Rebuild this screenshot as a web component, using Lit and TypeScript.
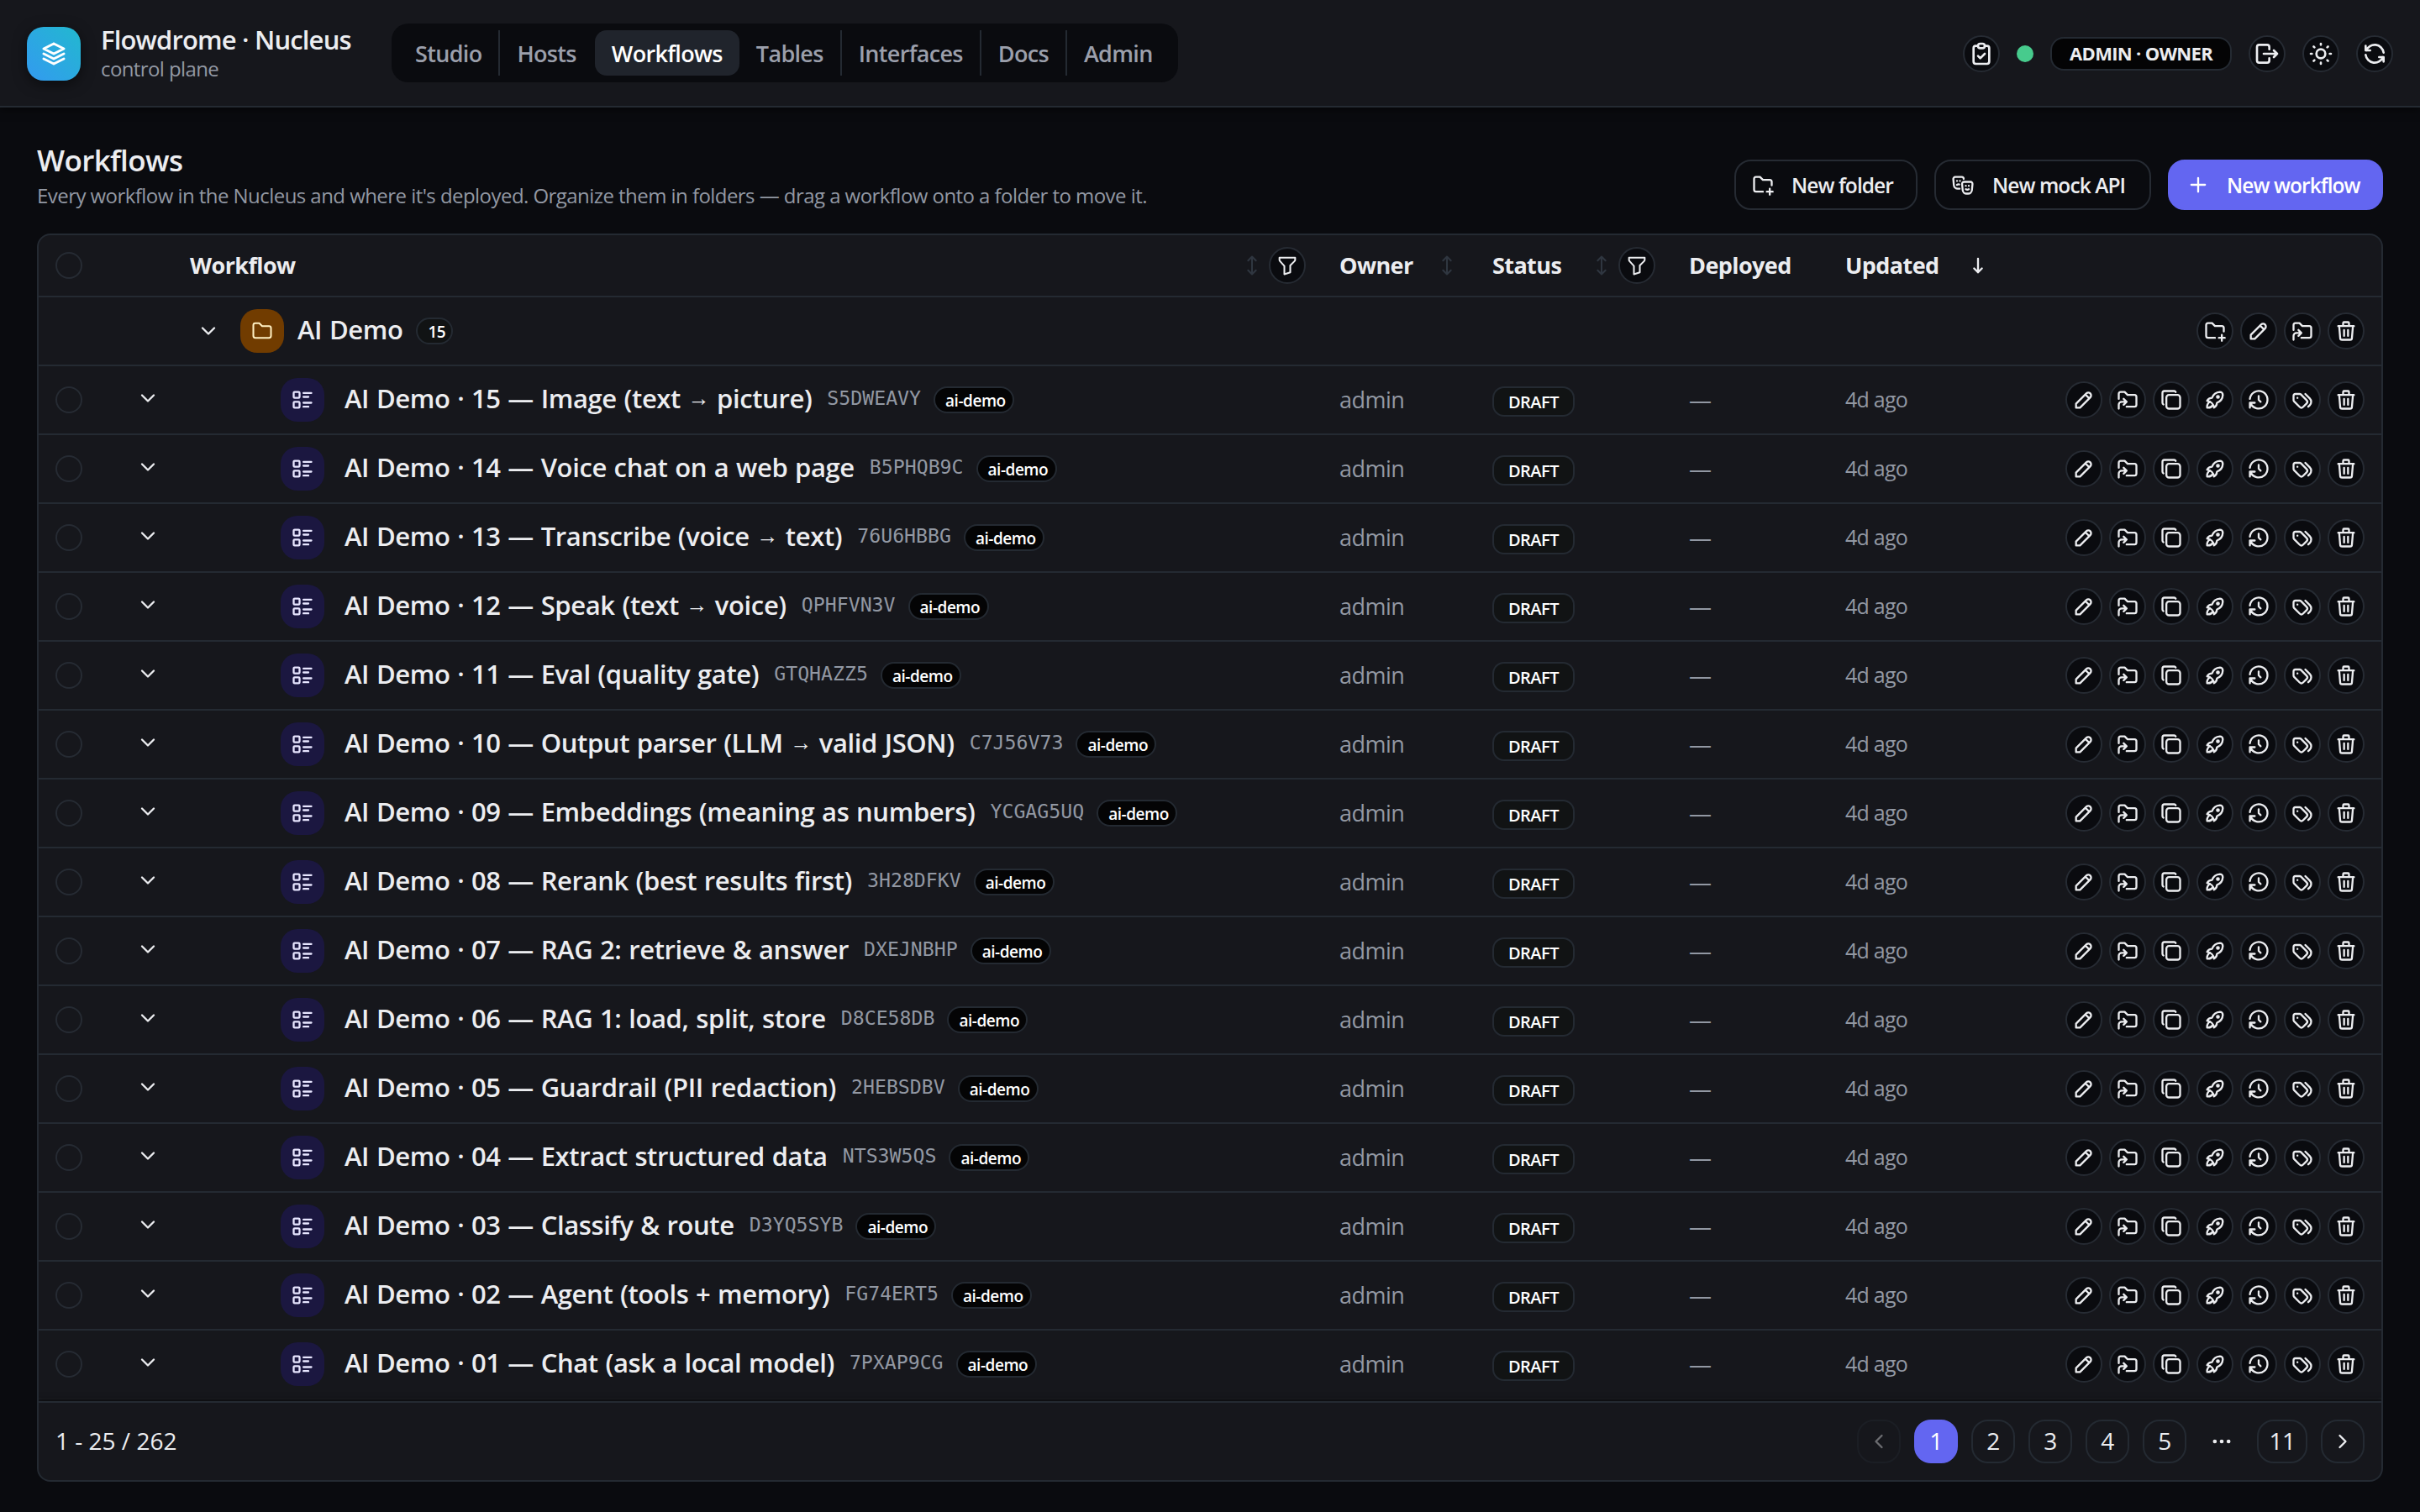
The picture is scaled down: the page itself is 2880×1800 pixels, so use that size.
import { LitElement, html, css, svg } from 'lit';
import { customElement, property } from 'lit/decorators.js';
import { classMap } from 'lit/directives/class-map.js';

const ICONS: Record<string, string> = {
  stack: 'M12 4L4 8l8 4l8-4l-8-4M4 12l8 4l8-4M4 16l8 4l8-4',
  clipboard: 'M9 5H7a2 2 0 0 0-2 2v12a2 2 0 0 0 2 2h10a2 2 0 0 0 2-2V7a2 2 0 0 0-2-2h-2M9 5a2 2 0 0 1 2-2h2a2 2 0 0 1 2 2a2 2 0 0 1-2 2h-2a2 2 0 0 1-2-2M9 14l2 2l4-4',
  logout: 'M14 8V6a2 2 0 0 0-2-2H5a2 2 0 0 0-2 2v12a2 2 0 0 0 2 2h7a2 2 0 0 0 2-2v-2M9 12h12l-3-3M18 15l3-3',
  sun: 'M8 12a4 4 0 1 0 8 0a4 4 0 1 0-8 0M3 12h1M12 3v1M20 12h1M12 20v1M5.6 5.6l.7.7M18.4 5.6l-.7.7M17.7 17.7l.7.7M6.3 17.7l-.7.7',
  refresh: 'M20 11A8.1 8.1 0 0 0 4.5 9M4 5v4h4M4 13a8.1 8.1 0 0 0 15.5 2M20 19v-4h-4',
  folder: 'M5 4h4l3 3h7a2 2 0 0 1 2 2v8a2 2 0 0 1-2 2H5a2 2 0 0 1-2-2V6a2 2 0 0 1 2-2',
  folderPlus: 'M12 19H5a2 2 0 0 1-2-2V6a2 2 0 0 1 2-2h4l3 3h7a2 2 0 0 1 2 2v3.5M16 19h6M19 16v6',
  masks: 'M13.192 9h6.616a2 2 0 0 1 1.992 2.183l-.567 6.182A4 4 0 0 1 17.25 21h-1.5a4 4 0 0 1-3.983-3.635l-.567-6.182A2 2 0 0 1 13.192 9M15 13h.01M18 13h.01M15 16.5c1 .667 2 .667 3 0M8.632 15.982A4.037 4.037 0 0 1 8.25 16h-1.5a4 4 0 0 1-3.983-3.635L2.2 6.183A2 2 0 0 1 4.192 4h6.616a2 2 0 0 1 2 2M6 8h.01M9 8h.01M6 12c.764-.51 1.528-.63 2.291-.36',
  plus: 'M12 5v14M5 12h14',
  sort: 'M8 7l4-4l4 4M8 17l4 4l4-4M12 3v18',
  arrowDown: 'M12 5v14M16 15l-4 4M8 15l4 4',
  filter: 'M4 4h16v2.172a2 2 0 0 1-.586 1.414L15 12v7l-6 2v-8.5L4.52 7.572A2 2 0 0 1 4 6.227z',
  chevronDown: 'M6 9l6 6l6-6',
  chevronLeft: 'M15 6l-6 6l6 6',
  chevronRight: 'M9 6l6 6l-6 6',
  list: 'M13 5h8M13 9h5M13 15h8M13 19h5M3 5a1 1 0 0 1 1-1h4a1 1 0 0 1 1 1v4a1 1 0 0 1-1 1H4a1 1 0 0 1-1-1zM3 15a1 1 0 0 1 1-1h4a1 1 0 0 1 1 1v4a1 1 0 0 1-1 1H4a1 1 0 0 1-1-1z',
  pencil: 'M4 20h4L18.5 9.5a2.828 2.828 0 1 0-4-4L4 16v4M13.5 6.5l4 4',
  move: 'M3 21v-4a3 3 0 0 1 3-3h5M8 17l3-3l-3-3M3 11V6a2 2 0 0 1 2-2h4l3 3h7a2 2 0 0 1 2 2v8a2 2 0 0 1-2 2h-8',
  copy: 'M7 9.667A2.667 2.667 0 0 1 9.667 7h8.666A2.667 2.667 0 0 1 21 9.667v8.666A2.667 2.667 0 0 1 18.333 21H9.667A2.667 2.667 0 0 1 7 18.333zM4.012 16.737A2 2 0 0 1 3 15V5c0-1.1.9-2 2-2h10c.75 0 1.158.385 1.5 1',
  rocket: 'M4 13a8 8 0 0 1 7 7a6 6 0 0 0 3-5a9 9 0 0 0 6-8a3 3 0 0 0-3-3a9 9 0 0 0-8 6a6 6 0 0 0-5 3M7 14a6 6 0 0 0-3 6a6 6 0 0 0 6-3M14 9a1 1 0 1 0 2 0a1 1 0 1 0-2 0',
  history: 'M12 8v4l2 2M3.05 11a9 9 0 1 1 .5 4M3.05 20v-5h5',
  tags: 'M3 8v4.172a2 2 0 0 0 .586 1.414l5.71 5.71a2.41 2.41 0 0 0 3.408 0l3.592-3.592a2.41 2.41 0 0 0 0-3.408l-5.71-5.71A2 2 0 0 0 9.172 6H5a2 2 0 0 0-2 2M18 19l1.592-1.592a4.82 4.82 0 0 0 0-6.816L15 6M7 10h-.01',
  trash: 'M4 7h16M10 11v6M14 11v6M5 7l1 12a2 2 0 0 0 2 2h8a2 2 0 0 0 2-2l1-12M9 7V4a1 1 0 0 1 1-1h4a1 1 0 0 1 1 1v3',
  dots: 'M4 12a1 1 0 1 0 2 0a1 1 0 1 0-2 0M11 12a1 1 0 1 0 2 0a1 1 0 1 0-2 0M18 12a1 1 0 1 0 2 0a1 1 0 1 0-2 0',
};

interface Workflow {
  name: string;
  code: string;
}

const WORKFLOWS: Workflow[] = [
  { name: 'AI Demo · 15 — Image (text → picture)', code: 'S5DWEAVY' },
  { name: 'AI Demo · 14 — Voice chat on a web page', code: 'B5PHQB9C' },
  { name: 'AI Demo · 13 — Transcribe (voice → text)', code: '76U6HBBG' },
  { name: 'AI Demo · 12 — Speak (text → voice)', code: 'QPHFVN3V' },
  { name: 'AI Demo · 11 — Eval (quality gate)', code: 'GTQHAZZ5' },
  { name: 'AI Demo · 10 — Output parser (LLM → valid JSON)', code: 'C7J56V73' },
  { name: 'AI Demo · 09 — Embeddings (meaning as numbers)', code: 'YCGAG5UQ' },
  { name: 'AI Demo · 08 — Rerank (best results first)', code: '3H28DFKV' },
  { name: 'AI Demo · 07 — RAG 2: retrieve & answer', code: 'DXEJNBHP' },
  { name: 'AI Demo · 06 — RAG 1: load, split, store', code: 'D8CE58DB' },
  { name: 'AI Demo · 05 — Guardrail (PII redaction)', code: '2HEBSDBV' },
  { name: 'AI Demo · 04 — Extract structured data', code: 'NTS3W5QS' },
  { name: 'AI Demo · 03 — Classify & route', code: 'D3YQ5SYB' },
  { name: 'AI Demo · 02 — Agent (tools + memory)', code: 'FG74ERT5' },
  { name: 'AI Demo · 01 — Chat (ask a local model)', code: '7PXAP9CG' },
];

const NAV = ['Studio', 'Hosts', 'Workflows', 'Tables', 'Interfaces', 'Docs', 'Admin'];
const FOLDER_ACTIONS = ['folderPlus', 'pencil', 'move', 'trash'];
const ROW_ACTIONS = ['pencil', 'move', 'copy', 'rocket', 'history', 'tags', 'trash'];

@customElement('ui-icon')
export class UiIcon extends LitElement {
  static styles = css`
    :host {
      display: block;
      flex: none;
      width: 28px;
      height: 28px;
      stroke-width: 2;
    }

    svg {
      display: block;
      width: 100%;
      height: 100%;
      fill: none;
      stroke: currentColor;
      stroke-linecap: round;
      stroke-linejoin: round;
    }
  `;

  @property({ type: String })
  name = '';

  render() {
    return html`<svg viewBox="0 0 24 24">${svg`<path d=${ICONS[this.name]}></path>`}</svg>`;
  }
}

@customElement('app-root')
export class AppRoot extends LitElement {
  static styles = css`
    :host {
      display: flex;
      flex-direction: column;
      box-sizing: border-box;
      width: 2880px;
      height: 1800px;
      overflow: hidden;
      background: #0a0b0f;
      color: #ecedf0;
      font-family: 'Open Sans', 'Noto Sans', sans-serif;
      font-size: 28px;
      line-height: 1.35;
      --line: #242a32;
      --panel: #16171c;
      --muted: #9298a3;
    }

    * {
      box-sizing: border-box;
    }

    .header {
      display: flex;
      align-items: center;
      flex: none;
      height: 128px;
      padding: 0 32px;
      background: var(--panel);
      border-bottom: 2px solid var(--line);
      box-shadow: 0 2px 10px rgba(0, 0, 0, 0.6);
    }

    .logo {
      display: grid;
      place-items: center;
      width: 64px;
      height: 64px;
      border-radius: 20px;
      margin: 2px 24px 0 0;
      background: linear-gradient(45deg, #339af0, #22b8cf);
      color: #fff;
      box-shadow: 0 4px 16px rgba(0, 0, 0, 0.5);
    }

    .logo ui-icon {
      width: 36px;
      height: 36px;
    }

    .brand {
      width: 346px;
      white-space: nowrap;
    }

    .brand-name {
      font-size: 31px;
      font-weight: 600;
      line-height: 38px;
      letter-spacing: -0.027em;
    }

    .brand-sub {
      font-size: 24px;
      line-height: 32px;
      color: var(--muted);
      letter-spacing: -0.025em;
    }

    .nav {
      display: flex;
      height: 70px;
      padding: 8px;
      border-radius: 20px;
      background: #0a0b0f;
    }

    .nav-item {
      display: flex;
      align-items: center;
      padding: 2px 20px 0;
      border-right: 2px solid var(--line);
      font-size: 27px;
      font-weight: 600;
      letter-spacing: -0.025em;
      color: #9b9fab;
    }

    .nav-item.plain {
      border-right-color: transparent;
    }

    .nav-item.active {
      border-right: 0;
      border-radius: 14px;
      background: #20242c;
      color: #fff;
    }

    .tools {
      display: flex;
      align-items: center;
      gap: 20px;
      margin: 2px 0 0 auto;
    }

    .round {
      display: grid;
      place-items: center;
      flex: none;
      width: 44px;
      height: 44px;
      border: 2px solid #262b33;
      border-radius: 50%;
      background: #0a0b0f;
    }

    .tools ui-icon {
      width: 32px;
      height: 32px;
    }

    .online {
      width: 20px;
      height: 20px;
      border-radius: 50%;
      background: #47cb8d;
    }

    .role {
      display: grid;
      place-items: center;
      width: 216px;
      height: 40px;
      border: 2px solid var(--line);
      border-radius: 16px;
      background: #040405;
      font-size: 22px;
      font-weight: 700;
      letter-spacing: -0.03em;
      white-space: nowrap;
    }

    .main {
      flex: 1;
      display: flex;
      flex-direction: column;
      min-height: 0;
      padding: 38px 44px 36px;
    }

    .page-head {
      display: flex;
      justify-content: space-between;
      flex: none;
      height: 112px;
    }

    h1 {
      margin: 0;
      font-size: 35px;
      font-weight: 600;
      line-height: 50px;
      letter-spacing: -0.018em;
    }

    .lead {
      font-size: 24px;
      line-height: 34px;
      color: var(--muted);
      letter-spacing: -0.023em;
    }

    .buttons {
      display: flex;
      gap: 20px;
      padding-top: 24px;
    }

    .button {
      display: flex;
      align-items: center;
      gap: 20px;
      height: 60px;
      padding-left: 18px;
      border: 2px solid #262b33;
      border-radius: 20px;
      font-size: 24.5px;
      font-weight: 600;
      letter-spacing: -0.038em;
      white-space: nowrap;
    }

    .button span {
      padding-top: 2px;
    }

    .new-folder {
      width: 218px;
    }

    .new-mock {
      width: 258px;
      gap: 21px;
    }

    .new-workflow {
      width: 256px;
      padding-left: 20px;
      border-color: #6366f1;
      background: #6366f1;
      color: #fff;
    }

    .table {
      display: flex;
      flex-direction: column;
      height: 1486px;
      border: 2px solid var(--line);
      border-radius: 16px;
      background: var(--panel);
      overflow: hidden;
    }

    .row {
      display: grid;
      grid-template-columns: 72px 88px 1368px 182px 234px 186px 212px 446px;
      align-items: center;
      flex: none;
      height: 82px;
      border-bottom: 2px solid var(--line);
    }

    .row.head {
      height: 74px;
      font-size: 27px;
      font-weight: 700;
      letter-spacing: -0.022em;
    }

    .row:last-of-type {
      border-bottom-color: #1b1d22;
    }

    .cell {
      display: flex;
      align-items: center;
      padding: 0 20px;
      white-space: nowrap;
    }

    .head .cell > ui-icon {
      margin-left: auto;
    }

    .head .round {
      margin-left: 6px;
    }

    .head .sort {
      color: #2f3640;
      stroke-width: 1.75;
    }

    .head .round ui-icon {
      stroke-width: 1.75;
    }

    .check {
      width: 32px;
      height: 32px;
      border: 2px solid #262b33;
      border-radius: 50%;
    }

    .expand {
      padding: 0 0 4px 44px;
    }

    .folder-cell {
      grid-column: 3;
      padding-left: 28px;
    }

    .tile {
      display: grid;
      place-items: center;
      flex: none;
      width: 52px;
      height: 52px;
      border-radius: 20px;
    }

    .tile.orange {
      margin: 0 16px 0 24px;
      background: #713c00;
      color: #fff0c2;
    }

    .tile.orange ui-icon {
      stroke-width: 1.75;
    }

    .tile.indigo {
      margin: 0 24px 0 108px;
      background: #1b1740;
      color: #e8e6ff;
    }

    .name {
      font-size: 31px;
      font-weight: 600;
      line-height: 44px;
      letter-spacing: -0.012em;
      word-spacing: 1px;
      padding-bottom: 4px;
    }

    .arrow {
      font-size: 26px;
      line-height: 1;
      vertical-align: 3px;
    }

    .code {
      margin: 0 15px 0 18px;
      padding-bottom: 5px;
      font-family: 'DejaVu Sans Mono', monospace;
      font-size: 23.2px;
      line-height: 34px;
      color: var(--muted);
    }

    .badge {
      display: grid;
      place-items: center;
      height: 32px;
      padding: 2px 12px 0;
      border: 2px solid var(--line);
      border-radius: 16px;
      font-size: 19px;
      font-weight: 600;
      line-height: 26px;
      letter-spacing: -0.025em;
      color: #fff;
      background: #040405;
    }

    .badge.count {
      width: 44px;
      margin-left: 16px;
      background: #111314;
    }

    .badge.tag {
      width: 96px;
    }

    .badge.status {
      width: 98px;
      height: 36px;
      margin-top: 4px;
      border-radius: 14px;
      font-size: 20px;
      background: #111314;
    }

    .muted {
      font-size: 27px;
      color: var(--muted);
      letter-spacing: -0.02em;
    }

    .time {
      font-size: 25px;
      letter-spacing: -0.03em;
    }

    .actions {
      justify-content: flex-end;
      gap: 8px;
    }

    .folder-actions {
      grid-column: 8;
    }

    .footer {
      display: flex;
      align-items: center;
      justify-content: space-between;
      flex: 1;
      margin-top: 2px;
      padding: 0 20px;
      border-top: 2px solid var(--line);
      box-shadow: 0 -2px 6px rgba(0, 0, 0, 0.5);
    }

    .pages {
      display: flex;
      gap: 16px;
    }

    .page {
      display: grid;
      place-items: center;
      min-width: 52px;
      height: 52px;
      border: 2px solid var(--line);
      border-radius: 20px;
      letter-spacing: -0.02em;
    }

    .page.wide {
      width: 60px;
    }

    .page.current {
      border-color: #6366f1;
      background: #6366f1;
      color: #fff;
    }

    .page.disabled {
      opacity: 0.4;
    }

    .page.more {
      border-color: transparent;
      stroke-width: 2.5;
    }
  `;

  render() {
    return html`
      <header class="header">
        <div class="logo"><ui-icon name="stack"></ui-icon></div>
        <div class="brand">
          <div class="brand-name">Flowdrome · Nucleus</div>
          <div class="brand-sub">control plane</div>
        </div>
        <nav class="nav">
          ${NAV.map((item) => html`
            <div class=${classMap({ 'nav-item': true, active: item === 'Workflows', plain: item === 'Hosts' || item === 'Admin' })}>${item}</div>
          `)}
        </nav>
        <div class="tools">
          ${this._round('clipboard')}
          <span class="online"></span>
          <span class="role">ADMIN · OWNER</span>
          ${this._round('logout')} ${this._round('sun')} ${this._round('refresh')}
        </div>
      </header>
      <main class="main">
        <div class="page-head">
          <div>
            <h1>Workflows</h1>
            <div class="lead">Every workflow in the Nucleus and where it's deployed. Organize them in folders — drag a workflow onto a folder to move it.</div>
          </div>
          <div class="buttons">
            <div class="button new-folder"><ui-icon name="folderPlus"></ui-icon><span>New folder</span></div>
            <div class="button new-mock"><ui-icon name="masks"></ui-icon><span>New mock API</span></div>
            <div class="button new-workflow"><ui-icon name="plus"></ui-icon><span>New workflow</span></div>
          </div>
        </div>
        <div class="table">
          ${this._renderHead()} ${this._renderFolder()}
          ${WORKFLOWS.map((workflow) => this._renderWorkflow(workflow))}
          ${this._renderFooter()}
        </div>
      </main>
    `;
  }

  private _round(name: string) {
    return html`<span class="round"><ui-icon name=${name}></ui-icon></span>`;
  }

  // the arrow glyph comes from a wider fallback font, so it is sized separately
  private _title(name: string) {
    const [before, after] = name.split('→');
    return after ? html`${before}<span class="arrow">→</span>${after}` : name;
  }

  private _renderHead() {
    return html`
      <div class="row head">
        <div class="cell"><span class="check"></span></div>
        <div></div>
        <div class="cell">Workflow<ui-icon class="sort" name="sort"></ui-icon>${this._round('filter')}</div>
        <div class="cell">Owner<ui-icon class="sort" name="sort"></ui-icon></div>
        <div class="cell">Status<ui-icon class="sort" name="sort"></ui-icon>${this._round('filter')}</div>
        <div class="cell">Deployed</div>
        <div class="cell">Updated<ui-icon name="arrowDown"></ui-icon></div>
        <div></div>
      </div>
    `;
  }

  private _renderFolder() {
    return html`
      <div class="row">
        <div class="cell folder-cell">
          <ui-icon name="chevronDown"></ui-icon>
          <span class="tile orange"><ui-icon name="folder"></ui-icon></span>
          <span class="name">AI Demo</span>
          <span class="badge count">15</span>
        </div>
        <div class="cell actions folder-actions">${FOLDER_ACTIONS.map((name) => this._round(name))}</div>
      </div>
    `;
  }

  private _renderWorkflow(workflow: Workflow) {
    return html`
      <div class="row">
        <div class="cell"><span class="check"></span></div>
        <div class="expand"><ui-icon name="chevronDown"></ui-icon></div>
        <div class="cell">
          <span class="tile indigo"><ui-icon name="list"></ui-icon></span>
          <span class="name">${this._title(workflow.name)}</span>
          <span class="code">${workflow.code}</span>
          <span class="badge tag">ai-demo</span>
        </div>
        <div class="cell muted">admin</div>
        <div class="cell"><span class="badge status">DRAFT</span></div>
        <div class="cell muted">—</div>
        <div class="cell muted time">4d ago</div>
        <div class="cell actions">${ROW_ACTIONS.map((name) => this._round(name))}</div>
      </div>
    `;
  }

  private _renderFooter() {
    return html`
      <footer class="footer">
        <span>1 - 25 / 262</span>
        <div class="pages">
          <span class="page disabled"><ui-icon name="chevronLeft"></ui-icon></span>
          <span class="page current">1</span>
          ${[2, 3, 4, 5].map((page) => html`<span class="page">${page}</span>`)}
          <span class="page more"><ui-icon name="dots"></ui-icon></span>
          <span class="page wide">11</span>
          <span class="page"><ui-icon name="chevronRight"></ui-icon></span>
        </div>
      </footer>
    `;
  }
}

declare global {
  interface HTMLElementTagNameMap {
    'ui-icon': UiIcon;
    'app-root': AppRoot;
  }
}
